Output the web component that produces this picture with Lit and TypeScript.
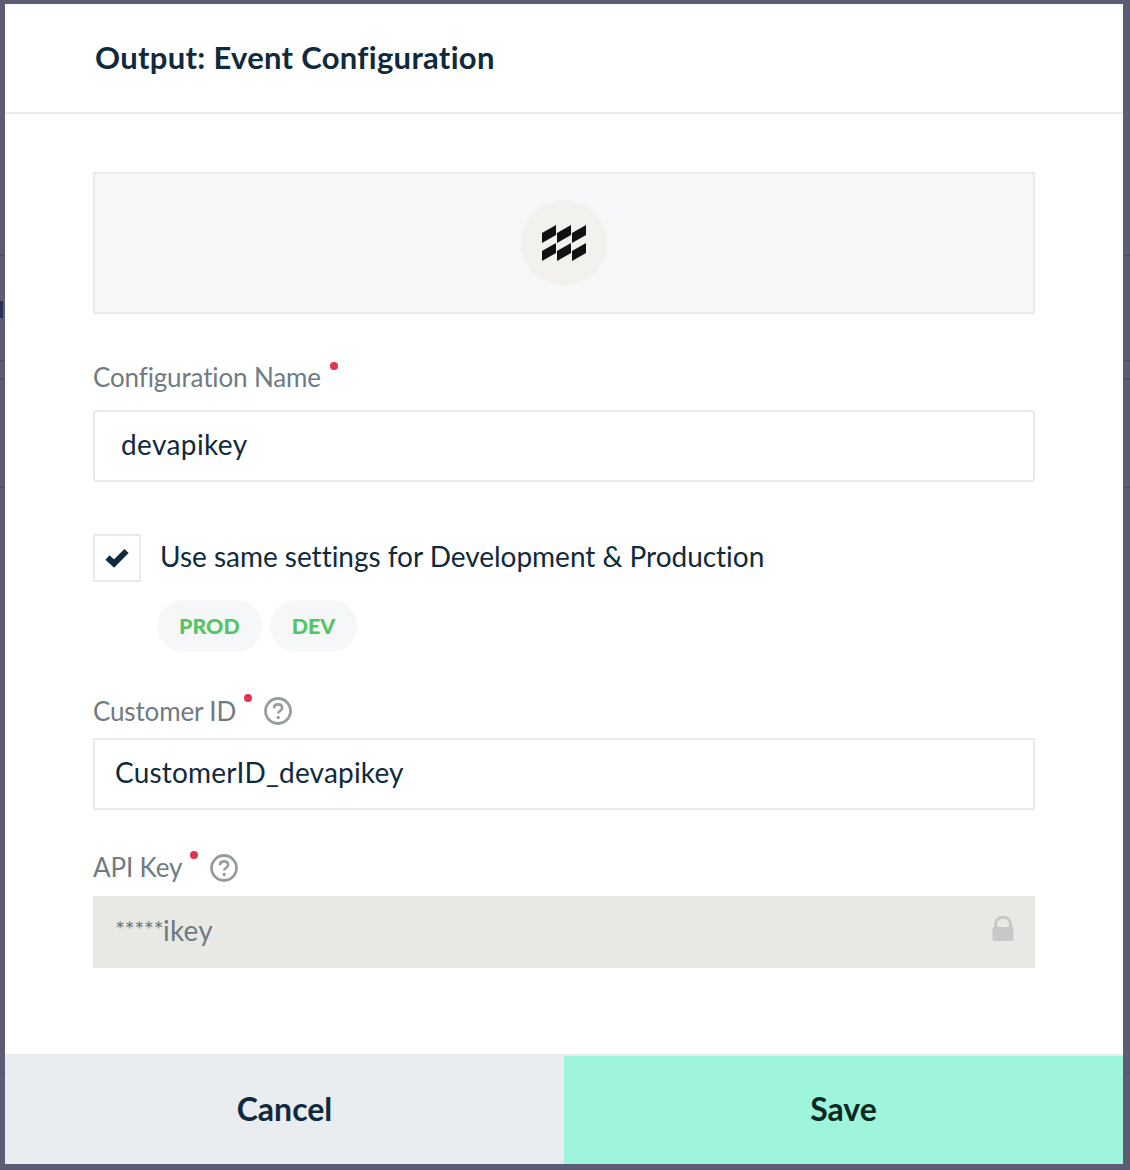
import { LitElement, html, css, svg } from 'lit'
import { customElement } from 'lit/decorators.js'

const help = html`<svg class="help" width="28" height="28" viewBox="0 0 28 28" aria-hidden="true">
	<circle cx="14" cy="14" r="12.5" fill="none" stroke="#979c9f" stroke-width="2.8"></circle>
	<path d="M10 11.2c0-2.4 1.8-3.8 4.1-3.8s4 1.4 4 3.5c0 3-3.9 2.8-3.9 5.6" fill="none" stroke="#979c9f" stroke-width="2.6"></path>
	<circle cx="14.2" cy="20.4" r="1.7" fill="#979c9f"></circle>
</svg>`

const cells = [0, 15, 30].flatMap((x) =>
	[0, 18].map((y) => svg`<path d="M${x} ${y + 8}L${x + 14} ${y}V${y + 10}L${x} ${y + 18}Z"></path>`),
)

@customElement('app-root')
export class AppRoot extends LitElement {
	static styles = css`
		:host {
			display: block;
			width: 1130px;
			height: 1170px;
			box-sizing: border-box;
			padding: 4px 7px 6px 5px;
			/* the dimmed page behind the dialog shows through in the gutters */
			background:
				linear-gradient(#25305a, #25305a) 0 301px / 3px 17px no-repeat,
				linear-gradient(#505169, #505169) 0 254px / 100% 2px no-repeat,
				linear-gradient(#505169, #505169) 0 360px / 100% 2px no-repeat,
				linear-gradient(#505169, #505169) 0 378px / 100% 2px no-repeat,
				linear-gradient(#505169, #505169) 0 486px / 100% 2px no-repeat,
				linear-gradient(#565770, #565770) 0 1072px / 100% 2px no-repeat,
				#5c5d75;
			font-family: 'Lato', 'Open Sans', sans-serif;
			font-variant-ligatures: none;
			color: #0f2a3d;
		}
		.modal {
			height: 1160px;
			background: #fff;
			display: flex;
			flex-direction: column;
		}
		header {
			height: 106px;
			box-sizing: content-box;
			border-bottom: 2px solid #e8eaeb;
			padding: 0 0 2px 90px;
			display: flex;
			align-items: center;
			font-size: 31px;
			font-weight: 700;
			letter-spacing: 0.3px;
		}
		.body {
			flex: 1;
			padding: 58px 88px 0;
		}
		.logo {
			height: 142px;
			box-sizing: border-box;
			background: #f6f7f8;
			border: 2px solid #e8eaeb;
			display: flex;
			align-items: center;
			justify-content: center;
		}
		.circle {
			width: 86px;
			height: 86px;
			border-radius: 50%;
			background: #f2f1ed;
			display: flex;
			align-items: center;
			justify-content: center;
		}
		.label {
			display: flex;
			align-items: center;
			height: 28px;
			font-size: 26px;
			letter-spacing: -0.15px;
			color: #6f7b82;
		}
		.label .text {
			position: relative;
			top: -1px;
		}
		.dot {
			width: 8px;
			height: 8px;
			border-radius: 50%;
			background: #e3324f;
			margin: -25px 0 0 9px;
		}
		.help {
			margin-left: 12px;
		}
		.input {
			height: 72px;
			box-sizing: border-box;
			border: 2px solid #e8eaeb;
			display: flex;
			align-items: center;
			font-size: 28px;
			letter-spacing: 0.2px;
			padding: 0 20px 4px;
			margin-top: 13px;
		}
		.name-label {
			margin-top: 50px;
		}
		.name {
			padding-left: 26px;
			border-radius: 4px;
			margin-top: 18px;
			letter-spacing: 0.4px;
		}
		.same {
			display: flex;
			align-items: center;
			gap: 20px;
			margin-top: 52px;
			font-size: 28px;
			letter-spacing: -0.02px;
		}
		.same span {
			position: relative;
			top: -2px;
			left: -1px;
		}
		.check {
			width: 48px;
			height: 48px;
			box-sizing: border-box;
			border: 2px solid #e8eaeb;
			display: flex;
			align-items: center;
			justify-content: center;
		}
		.pills {
			display: flex;
			gap: 8px;
			margin: 18px 0 0 64px;
		}
		.pill {
			height: 52px;
			padding: 0 22px;
			border-radius: 26px;
			background: #f6f7f8;
			color: #55c463;
			font-size: 21.4px;
			font-weight: 900;
			display: flex;
			align-items: center;
		}
		.customer-label {
			margin-top: 45px;
		}
		.customer-label .text {
			top: 0;
		}
		.customer-label .dot,
		.api-label .dot {
			margin-top: -27px;
			margin-left: 8px;
		}
		.api-label {
			margin-top: 44px;
		}
		.locked {
			border: none;
			background: #e8e9e4;
			color: #6f7b82;
			justify-content: space-between;
			padding: 0 21px 0 22px;
			margin-top: 14px;
		}
		.locked .value {
			position: relative;
			top: -2px;
		}
		.stars {
			font-size: 24px;
			letter-spacing: -0.6px;
			position: relative;
			top: -3px;
		}
		.lock {
			margin-bottom: 7px;
		}
		footer {
			height: 110px;
			box-sizing: border-box;
			border-top: 2px solid #e8eaeb;
			display: grid;
			grid-template-columns: 559px 559px;
			font-size: 32px;
			font-weight: 700;
		}
		footer div {
			display: flex;
			align-items: center;
			justify-content: center;
			padding-bottom: 4px;
		}
		.cancel {
			background: #e9edf0;
		}
		.save {
			background: #9ff4dc;
			color: #0c2a22;
		}
	`

	render() {
		return html`
			<div class="modal">
				<header>Output: Event Configuration</header>
				<div class="body">
					<div class="logo">
						<div class="circle">
							<svg width="44" height="36" viewBox="0 0 44 36" fill="#111114" aria-hidden="true">${cells}</svg>
						</div>
					</div>
					<div class="label name-label"><span class="text">Configuration Name</span><span class="dot"></span></div>
					<div class="input name">devapikey</div>
					<div class="same">
						<div class="check">
							<svg width="26" height="20" viewBox="0 0 26 20" aria-hidden="true">
								<path d="M3.5 9.5l6.5 6L22.5 3" fill="none" stroke="#0f2a3d" stroke-width="6"></path>
							</svg>
						</div>
						<span>Use same settings for Development &amp; Production</span>
					</div>
					<div class="pills">
						<div class="pill">PROD</div>
						<div class="pill">DEV</div>
					</div>
					<div class="label customer-label"><span class="text">Customer ID</span><span class="dot"></span>${help}</div>
					<div class="input">CustomerID_devapikey</div>
					<div class="label api-label"><span class="text">API Key</span><span class="dot"></span>${help}</div>
					<div class="input locked">
						<span class="value"><span class="stars">*****</span>ikey</span>
						<svg class="lock" width="22" height="25" viewBox="0 0 22 25" aria-hidden="true">
							<path d="M3.5 12V8.5a7.5 7.5 0 0 1 15 0V12" fill="none" stroke="#c8c8c8" stroke-width="3"></path>
							<rect x="0.5" y="11" width="21" height="14" rx="2" fill="#c8c8c8"></rect>
						</svg>
					</div>
				</div>
				<footer>
					<div class="cancel">Cancel</div>
					<div class="save">Save</div>
				</footer>
			</div>
		`
	}
}
